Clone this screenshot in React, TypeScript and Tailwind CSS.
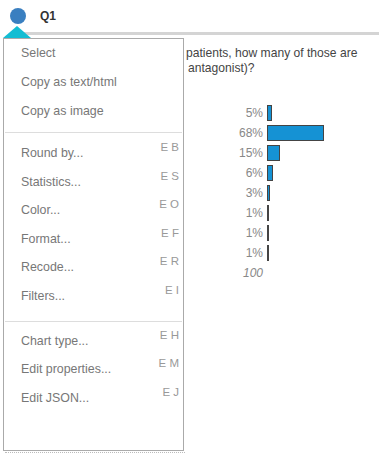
const menuGroups = [
  [
    { label: "Select" },
    { label: "Copy as text/html" },
    { label: "Copy as image" },
  ],
  [
    { label: "Round by...", key: "E B" },
    { label: "Statistics...", key: "E S" },
    { label: "Color...", key: "E O" },
    { label: "Format...", key: "E F" },
    { label: "Recode...", key: "E R" },
    { label: "Filters...", key: "E I" },
  ],
  [
    { label: "Chart type...", key: "E H" },
    { label: "Edit properties...", key: "E M" },
    { label: "Edit JSON...", key: "E J" },
  ],
];

const rows = [5, 68, 15, 6, 3, 1, 1, 1];

const App = () => {
  return (
    <div className="relative w-[386px] h-[455px] bg-white overflow-hidden font-['Liberation_Sans',Arial,sans-serif]">
      {/* Header */}
      <div className="flex items-center pt-[7px] pl-[10px] gap-[14px]">
        <div className="w-4 h-4 rounded-full bg-[#3a7fc0]" />
        <span className="text-[12px] font-bold text-[#333]">Q1</span>
      </div>
      <div className="ml-[20px] mt-[7px] w-[359px] h-[3px] bg-[#d4d4d4]" />

      {/* Question + chart (partly behind the menu) */}
      <div className="pl-[186px] mt-[11px] text-[12.1px] leading-[15px] text-[#444]">
        <div>patients, how many of those are</div>
        <div className="ml-[2px]">antagonist)?</div>
      </div>

      <div className="mt-[27px]">
        {rows.map((v, i) => (
          <div key={i} className="flex items-center h-[20px]">
            <span className="w-[263px] text-right text-[12px] text-[#888]">{v}%</span>
            <div className="ml-[4px] h-[16px] border border-[#444] bg-[#1592d4]" style={{ width: Math.max(1, v * 0.83 + 1) }} />
          </div>
        ))}
        <div className="flex items-center h-[20px]">
          <span className="w-[263px] text-right text-[12px] italic text-[#888]">100</span>
        </div>
      </div>

      {/* Axis dotted line under the menu */}
      <div className="absolute left-[5px] top-[452px] w-[180px] border-t border-dotted border-[#bbb]" />

      {/* Context menu */}
      <div className="absolute left-[3px] top-[38px] w-[181px] h-[413px] border border-[#aaa] bg-white text-[12.4px] text-[#777]">
        {menuGroups.map((group, gi) => (
          <div key={gi}>
            {gi > 0 && <div className={`mx-[1px] h-px bg-[#ddd] ${gi === 1 ? "mt-[6px] mb-[6px]" : "mt-[10px] mb-[5px]"}`} />}
            {group.map((item) => (
              <div key={item.label} className={`relative flex items-center pl-[17px] ${gi === 0 ? "h-[29px]" : "h-[28.6px]"}`}>
                <span>{item.label}</span>
                {item.key && (
                  <span className="absolute right-[4px] top-0 text-[11.5px] text-[#999]">{item.key}</span>
                )}
              </div>
            ))}
          </div>
        ))}
      </div>
      <div className="absolute left-[3px] top-[26px] w-0 h-0 border-l-[14px] border-r-[14px] border-b-[12px] border-l-transparent border-r-transparent border-b-[#13bdd3]" />
    </div>
  );
};

export default App;
